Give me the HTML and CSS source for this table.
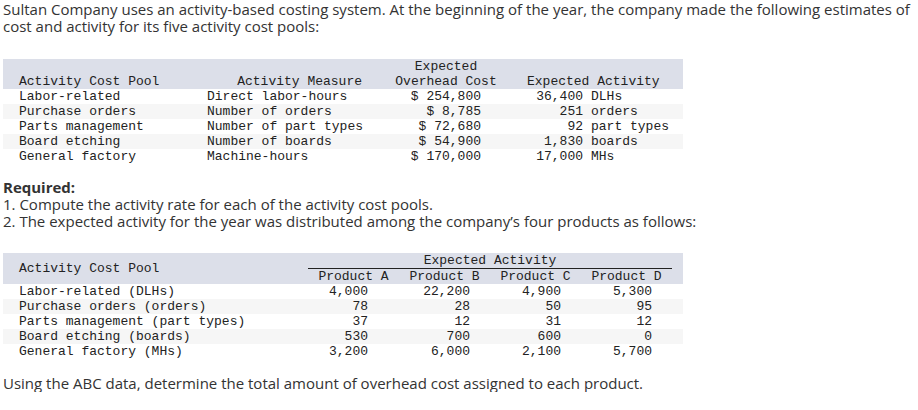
FILE: index.html
```html
<!DOCTYPE html>
<html>
<head>
<meta charset="utf-8">
<link rel="stylesheet" href="styles.css">
</head>
<body>
<div class="page">
  <p class="intro">Sultan Company uses an activity-based costing system. At the beginning of the year, the company made the following estimates of cost and activity for its five activity cost pools:</p>

  <table class="data t1">
    <colgroup>
      <col class="t1c1"><col class="t1c2"><col class="t1c3"><col class="t1c4"><col class="t1c5">
    </colgroup>
    <thead>
      <tr>
        <th></th><th></th><th class="center">Expected</th><th colspan="2"></th>
      </tr>
      <tr>
        <th class="first">Activity Cost Pool</th>
        <th class="measure-h">Activity Measure</th>
        <th class="center">Overhead Cost</th>
        <th colspan="2" class="act-h">Expected Activity</th>
      </tr>
    </thead>
    <tbody>
      <tr><td class="first">Labor-related</td><td class="measure">Direct labor-hours</td><td class="cost">$ 254,800</td><td class="num">36,400</td><td class="unit">DLHs</td></tr>
      <tr><td class="first">Purchase orders</td><td class="measure">Number of orders</td><td class="cost">$ 8,785</td><td class="num">251</td><td class="unit">orders</td></tr>
      <tr><td class="first">Parts management</td><td class="measure">Number of part types</td><td class="cost">$ 72,680</td><td class="num">92</td><td class="unit">part types</td></tr>
      <tr><td class="first">Board etching</td><td class="measure">Number of boards</td><td class="cost">$ 54,900</td><td class="num">1,830</td><td class="unit">boards</td></tr>
      <tr><td class="first">General factory</td><td class="measure">Machine-hours</td><td class="cost">$ 170,000</td><td class="num">17,000</td><td class="unit">MHs</td></tr>
    </tbody>
  </table>

  <div class="required">
    <p class="req-title">Required:</p>
    <p class="req-list">1. Compute the activity rate for each of the activity cost pools.
2. The expected activity for the year was distributed among the company’s four products as follows:</p>
  </div>

  <table class="data t2">
    <colgroup>
      <col class="t2c1"><col class="t2p"><col class="t2p"><col class="t2p"><col class="t2p"><col class="t2end">
    </colgroup>
    <thead>
      <tr>
        <th rowspan="2" class="first mid">Activity Cost Pool</th>
        <th colspan="4" class="center group">Expected Activity</th>
        <th></th>
      </tr>
      <tr>
        <th class="center">Product A</th>
        <th class="center">Product B</th>
        <th class="center">Product C</th>
        <th class="center">Product D</th>
        <th></th>
      </tr>
    </thead>
    <tbody>
      <tr><td class="first">Labor-related (DLHs)</td><td class="pa">4,000</td><td class="pb">22,200</td><td class="pb">4,900</td><td class="pb">5,300</td><td></td></tr>
      <tr><td class="first">Purchase orders (orders)</td><td class="pa">78</td><td class="pb">28</td><td class="pb">50</td><td class="pb">95</td><td></td></tr>
      <tr><td class="first">Parts management (part types)</td><td class="pa">37</td><td class="pb">12</td><td class="pb">31</td><td class="pb">12</td><td></td></tr>
      <tr><td class="first">Board etching (boards)</td><td class="pa">530</td><td class="pb">700</td><td class="pb">600</td><td class="pb">0</td><td></td></tr>
      <tr><td class="first">General factory (MHs)</td><td class="pa">3,200</td><td class="pb">6,000</td><td class="pb">2,100</td><td class="pb">5,700</td><td></td></tr>
    </tbody>
  </table>

  <p class="closing">Using the ABC data, determine the total amount of overhead cost assigned to each product.</p>
</div>
</body>
</html>
```

FILE: styles.css
```css
html, body {
  margin: 0;
  padding: 0;
  background: #ffffff;
}

.page {
  padding: 1px 0 0 3px;
  font-family: "Open Sans", "Liberation Sans", sans-serif;
  font-size: 15px;
  line-height: 17px;
  color: #333333;
}

p {
  margin: 0;
}

.intro {
  width: 912px;
}

.data {
  border-collapse: collapse;
  table-layout: fixed;
  width: 680px;
  font-family: "Liberation Mono", "Courier New", monospace;
  font-size: 13px;
  line-height: 15px;
  color: #222222;
}

.data th,
.data td {
  padding: 0;
  height: 15px;
  white-space: nowrap;
  font-weight: normal;
  vertical-align: middle;
}

.data thead tr {
  background: #dcdfe9;
}

.data tbody tr:nth-child(even) {
  background: #f6f6f6;
}

.data .first {
  text-align: left;
  padding-left: 16px;
}

.data .center {
  text-align: center;
}

/* Table 1 */
.t1 {
  margin-top: 24px;
}

.t1c1 { width: 197px; }
.t1c2 { width: 172px; }
.t1c3 { width: 148px; }
.t1c4 { width: 64px; }
.t1c5 { width: 99px; }

.t1 .measure-h {
  text-align: right;
  padding-right: 10px;
}

.t1 .measure {
  text-align: left;
  padding-left: 7px;
}

.t1 .cost {
  text-align: right;
  padding-right: 39px;
}

.t1 .act-h {
  text-align: left;
  padding-left: 7px;
}

.t1 .num {
  text-align: right;
  padding-right: 1px;
}

.t1 .unit {
  text-align: left;
  padding-left: 7px;
}

/* Required */
.required {
  margin-top: 15px;
}

.req-title {
  font-weight: bold;
}

.req-list {
  white-space: pre-line;
}

/* Table 2 */
.t2 {
  margin-top: 23px;
}

.t2c1 { width: 305px; }
.t2p { width: 91px; }
.t2end { width: 11px; }

.t2 .group {
  border-bottom: 1px solid #222222;
  height: 14px;
}

.t2 .pa {
  text-align: right;
  padding-right: 31px;
}

.t2 .pb {
  text-align: right;
  padding-right: 20px;
}

.closing {
  margin-top: 16px;
}
```
